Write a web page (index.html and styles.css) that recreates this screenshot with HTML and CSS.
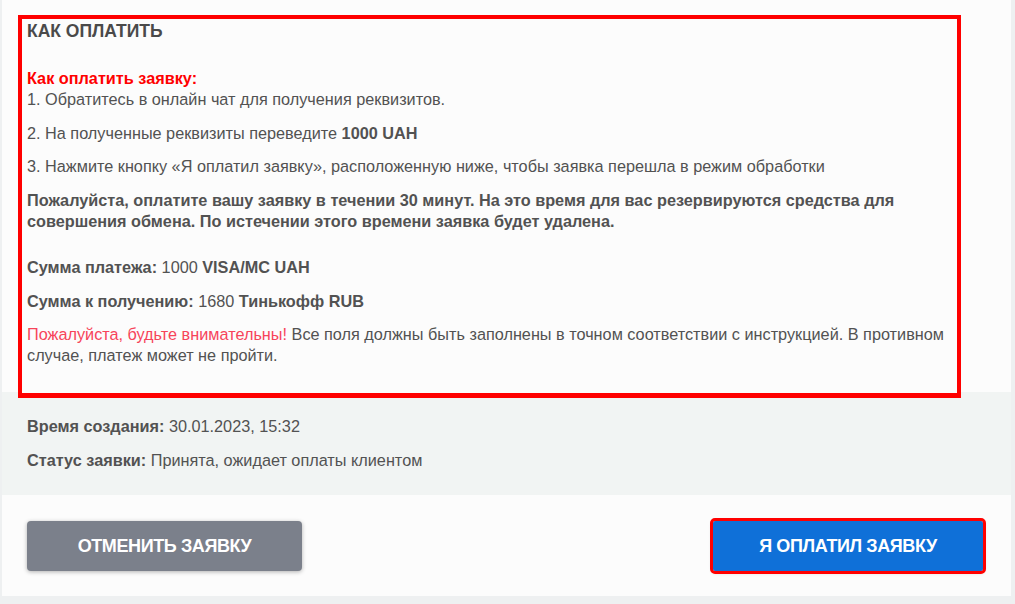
FILE: index.html
```html
<!DOCTYPE html>
<html lang="ru">

<head>
    <meta charset="UTF-8">
    <meta name="viewport" content="width=device-width, initial-scale=1.0">
    <title>Заявка</title>
    <link rel="stylesheet" href="styles.css">
</head>

<body>
    <div class="order">
        <div class="order-pay">
            <div class="howto">
                <h3 class="howto-title">КАК ОПЛАТИТЬ</h3>
                <p class="howto-steps">
                    <strong class="red">Как оплатить заявку:</strong><br>
                    1. Обратитесь в онлайн чат для получения реквизитов.
                </p>
                <p>2. На полученные реквизиты переведите <strong>1000 UAH</strong></p>
                <p>3. Нажмите кнопку «Я оплатил заявку», расположенную ниже, чтобы заявка перешла в режим обработки</p>
                <p class="howto-note"><strong>Пожалуйста, оплатите вашу заявку в течении 30 минут. На это время для вас резервируются средства для совершения обмена. По истечении этого времени заявка будет удалена.</strong></p>
                <p><strong>Сумма платежа:</strong> 1000 <strong>VISA/MC UAH</strong></p>
                <p><strong>Сумма к получению:</strong> 1680 <strong>Тинькофф RUB</strong></p>
                <p class="howto-warn"><span class="pink">Пожалуйста, будьте внимательны!</span> Все поля должны быть заполнены в точном соответствии с инструкцией. В противном случае, платеж может не пройти.</p>
            </div>
        </div>

        <div class="order-meta">
            <p><strong>Время создания:</strong> 30.01.2023, 15:32</p>
            <p><strong>Статус заявки:</strong> Принята, ожидает оплаты клиентом</p>
        </div>

        <div class="order-actions">
            <button class="btn btn-cancel" type="button">ОТМЕНИТЬ ЗАЯВКУ</button>
            <button class="btn btn-paid" type="button">Я ОПЛАТИЛ ЗАЯВКУ</button>
        </div>
    </div>
</body>

</html>
```

FILE: styles.css
```css
html,
body {
    margin: 0;
    padding: 0;
}

body {
    background: #eef0f1;
    font-family: "Liberation Sans", Arial, sans-serif;
    font-size: 16.25px;
    line-height: 21px;
    color: #525252;
    height: 604px;
    overflow: hidden;
}

.order {
    margin-left: 2px;
    width: 1009px;
}

.order p {
    margin: 0 0 12.5px;
}

.order strong {
    font-weight: bold;
}

.order-pay {
    background: #fcfcfc;
    height: 377px;
    padding: 15px 50px 0 16px;
}

.howto {
    position: relative;
    z-index: 1;
    border: 4px solid #ff0000;
    border-bottom-width: 5px;
    background: #fcfcfc;
    padding: 2px 8px 16px 5px;
    height: 356px;
}

.howto-title {
    margin: 0 0 26px;
    font-size: 17.5px;
    line-height: 21px;
    font-weight: bold;
    color: #4a4a4a;
}

.red {
    color: #ff0000;
}

.pink {
    color: #f7445a;
}

.howto-note {
    padding-bottom: 13px;
}

.order-meta {
    background: #f1f4f3;
    padding: 24px 25px 12px;
}

.order-actions {
    background: #fcfcfc;
    display: flex;
    justify-content: space-between;
    align-items: center;
    padding: 26px 28px 25px 25px;
}

.btn {
    height: 50px;
    border: 0;
    border-radius: 4px;
    color: #fff;
    font-family: "Liberation Sans", Arial, sans-serif;
    font-size: 18px;
    font-weight: bold;
    letter-spacing: -0.4px;
    box-shadow: 0 1px 4px rgba(0, 0, 0, 0.3);
    cursor: pointer;
}

.btn-cancel {
    width: 275px;
    background: #7b808b;
}

.btn-paid {
    width: 270px;
    background: #0f70d8;
    border-radius: 2px;
    outline: 3px solid #ff0000;
}
```
